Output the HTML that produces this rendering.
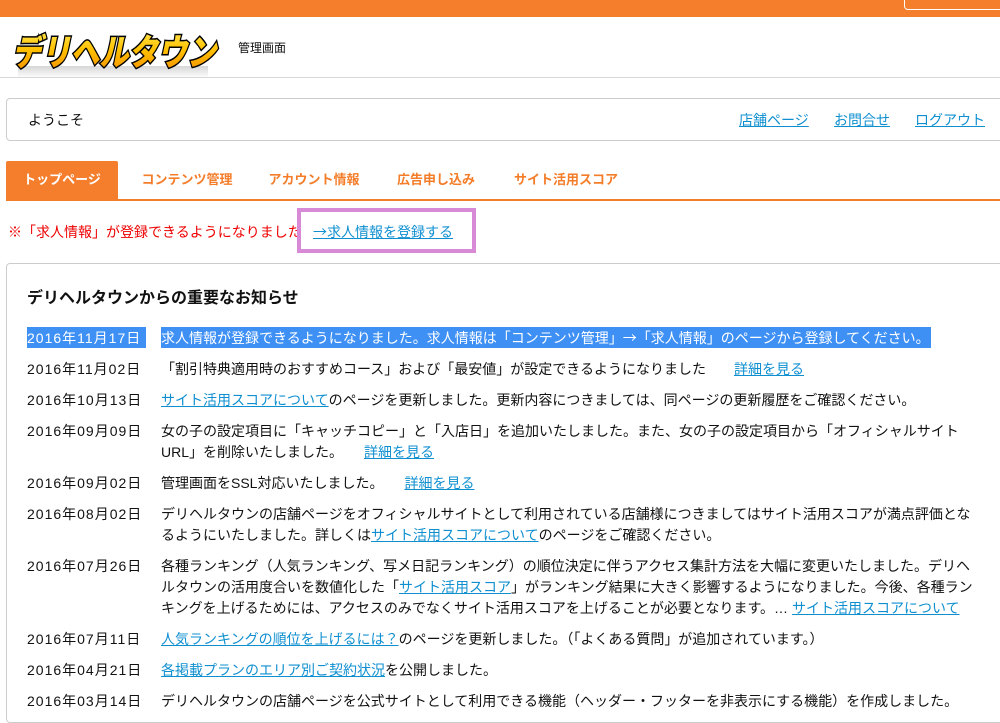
<!DOCTYPE html>
<html><head><meta charset="utf-8"><style>
*{margin:0;padding:0;box-sizing:border-box}
body{width:1000px;height:700px;overflow:hidden;background:#fff;font-family:"Liberation Sans","Noto Sans CJK JP",sans-serif;font-size:14px;color:#111;position:relative}
.a{position:absolute;white-space:nowrap}
a{color:#0f8fd0;text-decoration:underline}
.d{position:absolute;left:27px;white-space:nowrap;letter-spacing:1px}
.t{position:absolute;left:161px;white-space:nowrap;letter-spacing:0}
.ar{font-family:"Noto Sans CJK JP",sans-serif}
.tab{position:absolute;top:161px;height:38px;line-height:38px;font-size:13px;font-weight:bold;color:#f47d2a;text-align:center}
</style></head><body>
<div class="a" style="left:0;top:0;width:1000px;height:17px;background:#f57e2d"></div>
<div class="a" style="left:904px;top:-6px;width:110px;height:16px;border:1px solid #fff;border-radius:4px"></div>
<svg class="a" style="left:8px;top:22px" width="220" height="56">
<defs><linearGradient id="g" x1="0" y1="0" x2="0" y2="1"><stop offset="0" stop-color="#fff36a"/><stop offset="0.5" stop-color="#ffc000"/><stop offset="1" stop-color="#f28a00"/></linearGradient>
<linearGradient id="r" x1="0" y1="0" x2="0" y2="1"><stop offset="0" stop-color="#bbb"/><stop offset="1" stop-color="#fff"/></linearGradient></defs>
<rect x="10" y="44" width="190" height="12" fill="url(#r)" opacity="0.6"/>
<text x="4" y="43" font-family="Noto Sans CJK JP" font-weight="900" font-size="36" font-style="italic" textLength="204" lengthAdjust="spacingAndGlyphs" fill="url(#g)" stroke="#000" stroke-width="3" paint-order="stroke">デリヘルタウン</text>
</svg>
<div class="a" style="left:238px;top:39px;font-size:12px">管理画面</div>
<div class="a" style="left:0;top:77px;width:1000px;height:1px;background:#d8d8d8"></div>
<div class="a" style="left:6px;top:98px;width:1010px;height:43px;border:1px solid #ccc;border-radius:4px"></div>
<div class="a" style="left:28px;top:110px;font-size:14px">ようこそ</div>
<div class="a" style="left:739px;top:110px"><a>店舗ページ</a></div>
<div class="a" style="left:834px;top:110px"><a>お問合せ</a></div>
<div class="a" style="left:915px;top:110px"><a>ログアウト</a></div>
<div class="tab" style="left:6px;width:112px;background:#f57e2d;color:#fff;border-radius:2px 2px 0 0">トップページ</div>
<div class="tab" style="left:132px;width:110px">コンテンツ管理</div>
<div class="tab" style="left:258px;width:112px">アカウント情報</div>
<div class="tab" style="left:386px;width:100px">広告申し込み</div>
<div class="tab" style="left:506px;width:120px">サイト活用スコア</div>
<div class="a" style="left:6px;top:199px;width:994px;height:2px;background:#f57e2d"></div>
<div class="a" style="left:8px;top:222px;color:#e00;font-size:14px">※「求人情報」が登録できるようになりました</div>
<div class="a" style="left:297px;top:208px;width:179px;height:45px;border:4px solid #d88ad6;background:#fff"></div>
<div class="a" style="left:313px;top:222px"><a><span class="ar">→</span>求人情報を登録する</a></div>
<div class="a" style="left:6px;top:263px;width:1010px;height:460px;border:1px solid #ccc;border-radius:4px"></div>
<div class="a" style="left:27px;top:284px;font-size:16px;font-weight:bold">デリヘルタウンからの重要なお知らせ</div>
<div class="a" style="left:27px;top:327px;width:119px;height:21px;background:#3e90f5"></div>
<div class="a" style="left:161px;top:327px;width:770px;height:21px;background:#3e90f5"></div>
<div class="d" style="top:328px;color:#fff">2016年11月17日</div>
<div class="t" style="top:328px;color:#fff">求人情報が登録できるようになりました。求人情報は「コンテンツ管理」<span class="ar">→</span>「求人情報」のページから登録してください。</div>
<div class="d" style="top:359px">2016年11月02日</div>
<div class="t" style="top:359px">「割引特典適用時のおすすめコース」および「最安値」が設定できるようになりました　　<a>詳細を見る</a></div>
<div class="d" style="top:390px">2016年10月13日</div>
<div class="t" style="top:390px"><a>サイト活用スコアについて</a>のページを更新しました。更新内容につきましては、同ページの更新履歴をご確認ください。</div>
<div class="d" style="top:421px">2016年09月09日</div>
<div class="t" style="top:421px">女の子の設定項目に「キャッチコピー」と「入店日」を追加いたしました。また、女の子の設定項目から「オフィシャルサイト</div>
<div class="t" style="top:442px">URL」を削除いたしました。　　<a>詳細を見る</a></div>
<div class="d" style="top:473px">2016年09月02日</div>
<div class="t" style="top:473px">管理画面をSSL対応いたしました。　　<a>詳細を見る</a></div>
<div class="d" style="top:504px">2016年08月02日</div>
<div class="t" style="top:504px">デリヘルタウンの店舗ページをオフィシャルサイトとして利用されている店舗様につきましてはサイト活用スコアが満点評価とな</div>
<div class="t" style="top:525px">るようにいたしました。詳しくは<a>サイト活用スコアについて</a>のページをご確認ください。</div>
<div class="d" style="top:556px">2016年07月26日</div>
<div class="t" style="top:556px">各種ランキング（人気ランキング、写メ日記ランキング）の順位決定に伴うアクセス集計方法を大幅に変更いたしました。デリヘ</div>
<div class="t" style="top:577px">ルタウンの活用度合いを数値化した「<a>サイト活用スコア</a>」がランキング結果に大きく影響するようになりました。今後、各種ラン</div>
<div class="t" style="top:598px">キングを上げるためには、アクセスのみでなくサイト活用スコアを上げることが必要となります。… <a>サイト活用スコアについて</a></div>
<div class="d" style="top:629px">2016年07月11日</div>
<div class="t" style="top:629px"><a>人気ランキングの順位を上げるには？</a>のページを更新しました。（「よくある質問」が追加されています。）</div>
<div class="d" style="top:660px">2016年04月21日</div>
<div class="t" style="top:660px"><a>各掲載プランのエリア別ご契約状況</a>を公開しました。</div>
<div class="d" style="top:691px">2016年03月14日</div>
<div class="t" style="top:691px">デリヘルタウンの店舗ページを公式サイトとして利用できる機能（ヘッダー・フッターを非表示にする機能）を作成しました。</div>
</body></html>
